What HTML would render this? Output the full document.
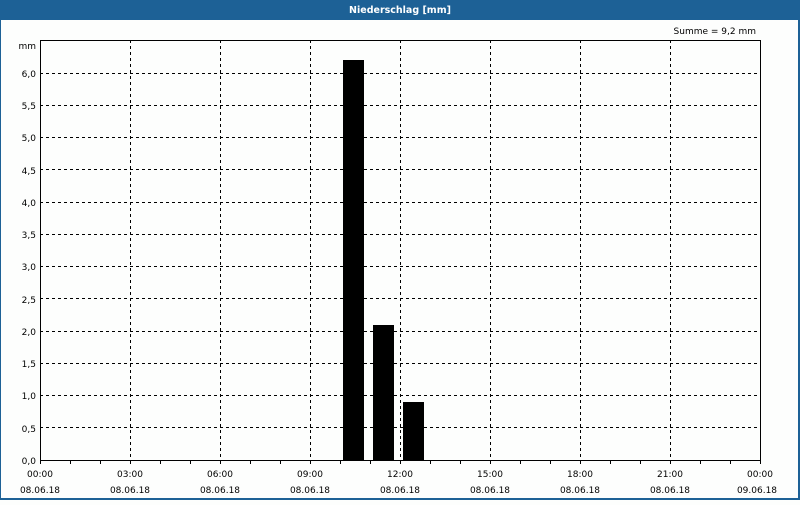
<!DOCTYPE html>
<html><head><style>
body{margin:0;width:800px;height:500px;overflow:hidden;background:#fdfefd}
text{font-family:"DejaVu Sans","Liberation Sans",sans-serif;font-size:9px;fill:#000}
</style></head><body>
<svg width="800" height="500" xmlns="http://www.w3.org/2000/svg">
<rect x="0" y="0" width="800" height="500" fill="#1d6196"/>
<rect x="1" y="20" width="797" height="478" fill="#fdfefd"/>
<text x="400" y="13" text-anchor="middle" style="font-weight:bold;fill:#fff;font-size:9.5px">Niederschlag [mm]</text>
<text x="756" y="34" text-anchor="end">Summe = 9,2 mm</text>
<text x="36" y="49" text-anchor="end">mm</text>
<g stroke="#000" stroke-width="1" stroke-dasharray="3,3" shape-rendering="crispEdges">
<path d="M40 427.5H760M40 395.5H760M40 363.5H760M40 331.5H760M40 298.5H760M40 266.5H760M40 234.5H760M40 202.5H760M40 169.5H760M40 137.5H760M40 105.5H760M40 73.5H760"/>
<path d="M130.5 40V460M220.5 40V460M310.5 40V460M400.5 40V460M490.5 40V460M580.5 40V460M670.5 40V460"/>
</g>
<g fill="#000" shape-rendering="crispEdges">
<rect x="343" y="60" width="21" height="400"/>
<rect x="373" y="325" width="21" height="135"/>
<rect x="403" y="402" width="21" height="58"/>
</g>
<rect x="40.5" y="40.5" width="720" height="420" fill="none" stroke="#000" shape-rendering="crispEdges"/>
<g stroke="#000" shape-rendering="crispEdges" id="t"></g>
<path stroke="#000" shape-rendering="crispEdges" d="M40.5 460V464M70.5 460V464M100.5 460V464M130.5 460V464M160.5 460V464M190.5 460V464M220.5 460V464M250.5 460V464M280.5 460V464M310.5 460V464M340.5 460V464M370.5 460V464M400.5 460V464M430.5 460V464M460.5 460V464M490.5 460V464M520.5 460V464M550.5 460V464M580.5 460V464M610.5 460V464M640.5 460V464M670.5 460V464M700.5 460V464M730.5 460V464M760.5 460V464"/>
<g text-anchor="end">
<text x="36" y="464">0,0</text><text x="36" y="432">0,5</text><text x="36" y="399">1,0</text><text x="36" y="367">1,5</text><text x="36" y="335">2,0</text><text x="36" y="303">2,5</text><text x="36" y="270">3,0</text><text x="36" y="238">3,5</text><text x="36" y="206">4,0</text><text x="36" y="174">4,5</text><text x="36" y="141">5,0</text><text x="36" y="109">5,5</text><text x="36" y="77">6,0</text>
</g>
<g text-anchor="middle">
<text x="40" y="477">00:00</text><text x="40" y="493">08.06.18</text>
<text x="130" y="477">03:00</text><text x="130" y="493">08.06.18</text>
<text x="220" y="477">06:00</text><text x="220" y="493">08.06.18</text>
<text x="310" y="477">09:00</text><text x="310" y="493">08.06.18</text>
<text x="400" y="477">12:00</text><text x="400" y="493">08.06.18</text>
<text x="490" y="477">15:00</text><text x="490" y="493">08.06.18</text>
<text x="580" y="477">18:00</text><text x="580" y="493">08.06.18</text>
<text x="670" y="477">21:00</text><text x="670" y="493">08.06.18</text>
<text x="760" y="477">00:00</text><text x="757" y="493">09.06.18</text>
</g>
</svg>
</body></html>
